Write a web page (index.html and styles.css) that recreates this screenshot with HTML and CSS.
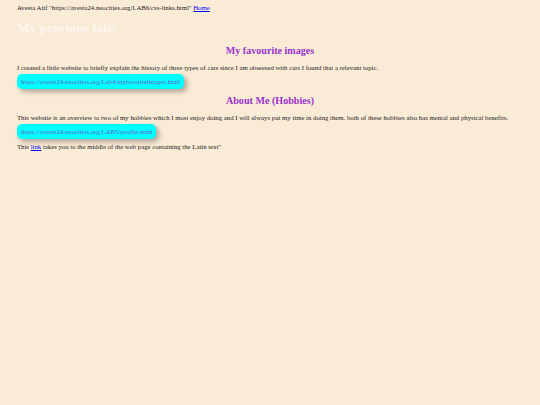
FILE: index.html
```html
<!DOCTYPE html>
<html>
<head>
<meta charset="utf-8">
<link rel="stylesheet" href="styles.css">
</head>
<body>
<p class="top">Avesta Atif "https://avesta24.neocities.org/LAB6/css-links.html" <a href="#">Home</a></p>
<h1 class="title">My previous labs</h1>
<h2 class="section">My favourite images</h2>
<p class="text">I created a little website to briefly explain the history of three types of cars since I am obseesed with cars I found that a relevant topic.</p>
<div class="btn-row"><a class="btn" href="#">https://avesta24.neocities.org/Lab4/myfavoriteimages.html</a></div>
<h2 class="section">About Me (Hobbies)</h2>
<p class="text">This website is an overview to two of my hobbies which I most enjoy doing and I will always put my time in doing them. both of these hobbies also has mental and physical benefits.</p>
<div class="btn-row"><a class="btn" href="#">https://avesta24.neocities.org/LAB5/profile.html</a></div>
<p class="text last">This <a href="#">link</a> takes you to the middle of the web page containing the Latin text"</p>
</body>
</html>
```
FILE: styles.css
```css
html, body {
  margin: 0;
  background: #faebd7;
}
body {
  padding: 4px 17px;
  font-family: "Liberation Serif", "Times New Roman", serif;
  font-size: 6.75px;
  color: #222;
}
a {
  color: #0000ee;
}
.top {
  margin: 0;
}
.title {
  font-size: 13.5px;
  margin: 9px 0;
  color: #fdf6ee;
}
.section {
  font-size: 10.1px;
  margin: 8.4px 0;
  text-align: center;
  color: #9932cc;
}
.text {
  margin: 6.75px 0 0;
}
.btn-row {
  margin: 3px 0 -3px;
}
.btn {
  display: inline-block;
  background: #00ffff;
  color: #6a5acd;
  text-decoration: none;
  padding: 4px 4px;
  border-radius: 5px;
  box-shadow: 3px 3px 5px rgba(0, 0, 0, 0.3);
}
.last {
  margin-top: 7px;
}
```
